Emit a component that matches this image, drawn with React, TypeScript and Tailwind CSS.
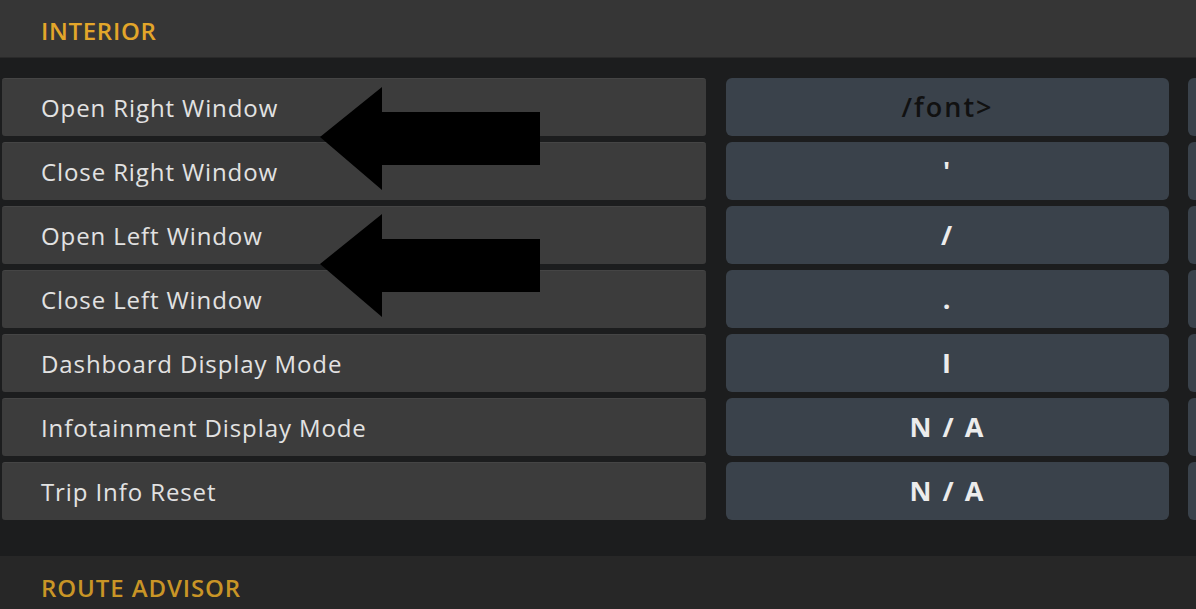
import React from 'react'

const rows = [
  { label: 'Open Right Window', value: '/font>', dark: true },
  { label: 'Close Right Window', value: "'" },
  { label: 'Open Left Window', value: '/' },
  { label: 'Close Left Window', value: '.' },
  { label: 'Dashboard Display Mode', value: 'I' },
  { label: 'Infotainment Display Mode', value: 'N / A' },
  { label: 'Trip Info Reset', value: 'N / A' },
]

// big black annotation arrow pointing left
const Arrow = ({ top }: { top: number }) => (
  <svg
    className="absolute left-[318px]"
    style={{ top }}
    width="224"
    height="104"
    viewBox="0 0 224 104"
  >
    <path d="M2 50 L64 0 L64 25 L222 25 L222 78 L64 78 L64 103 Z" fill="#000" />
  </svg>
)

export default function App() {
  return (
    <div className="relative w-[1196px] h-[609px] overflow-hidden bg-[#1c1d1e] font-['Open_Sans',sans-serif]">
      {/* Section header */}
      <div className="h-[58px] bg-[#363636] border-b border-[#2a2a2a] flex items-center pl-[41px] pt-[4px]">
        <span className="text-[24px] font-semibold text-[#e3a62a] tracking-[0.7px]">INTERIOR</span>
      </div>

      {/* Bindings */}
      <div className="mt-[20px] flex flex-col gap-[6px]">
        {rows.map((row) => (
          <div key={row.label} className="flex h-[58px]">
            <div className="ml-[2px] w-[704px] shrink-0 rounded-[3px] bg-[#3c3c3c] border-t border-[#454545] flex items-center pl-[39px]">
              <span className="text-[24px] font-medium text-[#e2e2e2] tracking-[0.9px]">{row.label}</span>
            </div>
            <div className="ml-[20px] w-[443px] shrink-0 rounded-[6px] bg-[#3a424b] flex items-center justify-center">
              <span
                className={`text-[27px] tracking-[2px] ${row.dark ? 'text-[#111] font-semibold' : 'text-[#ececec] font-bold'}`}
              >
                {row.value}
              </span>
            </div>
            <div className="ml-[19px] w-[60px] shrink-0 rounded-[6px] bg-[#3a424b]" />
          </div>
        ))}
      </div>

      {/* Next section */}
      <div className="mt-[36px] h-[53px] bg-[#272727] flex items-center pl-[41px] pt-[10px]">
        <span className="text-[24px] font-semibold text-[#c99526] tracking-[0.9px]">ROUTE ADVISOR</span>
      </div>

      <Arrow top={87} />
      <Arrow top={214} />
    </div>
  )
}
